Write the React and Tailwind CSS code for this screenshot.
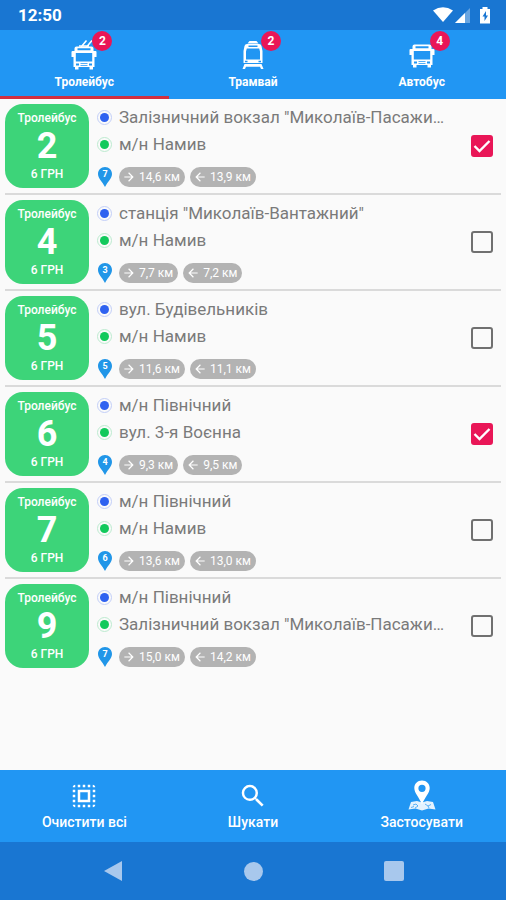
import { useState } from "react";
import { MdArrowBack, MdArrowForward, MdSearch, MdSelectAll } from "react-icons/md";

const TABS = [
  { id: "trolleybus", label: "Тролейбус", count: 2, Icon: TrolleybusIcon },
  { id: "tram", label: "Трамвай", count: 2, Icon: TramIcon },
  { id: "bus", label: "Автобус", count: 4, Icon: BusIcon },
];

const STATION = 'Залізничний вокзал "Миколаїв-Пасажи…';

const ROUTES = [
  { number: 2, from: STATION, to: "м/н Намив", vehicles: 7, there: "14,6 км", back: "13,9 км", checked: true },
  { number: 4, from: 'станція "Миколаїв-Вантажний"', to: "м/н Намив", vehicles: 3, there: "7,7 км", back: "7,2 км", checked: false },
  { number: 5, from: "вул. Будівельників", to: "м/н Намив", vehicles: 5, there: "11,6 км", back: "11,1 км", checked: false },
  { number: 6, from: "м/н Північний", to: "вул. 3-я Воєнна", vehicles: 4, there: "9,3 км", back: "9,5 км", checked: true },
  { number: 7, from: "м/н Північний", to: "м/н Намив", vehicles: 6, there: "13,6 км", back: "13,0 км", checked: false },
  { number: 9, from: "м/н Північний", to: STATION, vehicles: 7, there: "15,0 км", back: "14,2 км", checked: false },
];

function BusBody() {
  return (
    <>
      <path
        fillRule="evenodd"
        d="M4.500 6.500Q4.500 4.500 6.500 4.500H21.500Q23.500 4.500 23.500 6.500V9H25.500Q26.500 9 26.500 10V15H24.500V25H23V27.500H19.500V25H8.500V27.500H5V25H3.500V15H1.500V10Q1.500 9 2.500 9H4.500ZM7.500 6.300V8.300H20.500V6.300ZM5.800 11V19.500H22.200V11Z"
      />
      <path d="M6 21.500H9V23.500H6ZM19 21.500H22V23.500H19ZM10.500 21.300H17.500V22H10.500ZM10.500 23H17.500V23.700H10.500Z" fill="#2196f3" />
    </>
  );
}

function TrolleybusIcon() {
  return (
    <svg viewBox="0 0 28 32" className="h-8 w-7" fill="currentColor" aria-hidden="true">
      <g transform="translate(0 4)">
        <BusBody />
      </g>
      <path d="M11 9L16.500 2.500M16.500 9L22 2.500M9 8H19" stroke="currentColor" strokeWidth="1.500" fill="none" />
    </svg>
  );
}

function BusIcon() {
  return (
    <svg viewBox="0 0 28 32" className="h-8 w-7" fill="currentColor" aria-hidden="true">
      <g transform="translate(0 2)">
        <BusBody />
      </g>
    </svg>
  );
}

function TramIcon() {
  return (
    <svg viewBox="0 0 28 32" className="h-8 w-7" fill="currentColor" aria-hidden="true">
      <path d="M8.500 5.500L10.500 3H17.500L19.500 5.500Z" />
      <path
        fillRule="evenodd"
        d="M8 6H20Q22 6 22.500 8L23.500 13V25H4.500V13L5.500 8Q6 6 8 6ZM9.500 7.500V9H18.500V7.500ZM7.800 10.500L7 13.500V21.500H21V13.500L20.200 10.500Z"
      />
      <path d="M6 22.800H8.500V24.200H6ZM19.500 22.800H22V24.200H19.500Z" fill="#2196f3" />
      <path d="M5.500 26H22.500L24.500 31H22L21 28.700H7L6 31H3.500Z" />
    </svg>
  );
}

function MapPinIcon() {
  return (
    <svg viewBox="0 0 28 32" className="h-8 w-7" fill="currentColor" aria-hidden="true">
      <path d="M3 22L9 21L14 22.500L19 21L25 22L27.500 29.500L20.500 28.500L14 30.500L7.500 28.500L0.500 29.500Z" opacity="0.880" />
      <path d="M5 25L8 24L10 26L7 28M17 24L20 26L23 24.500M20 26L21 28M3 27.500L6 26.500" stroke="#2196f3" strokeWidth="0.700" fill="none" />
      <path
        fillRule="evenodd"
        d="M14 0.500C9.500 0.500 6.300 3.800 6.300 8C6.300 13 11 17 14 24.500C17 17 21.700 13 21.700 8C21.700 3.800 18.500 0.500 14 0.500ZM14 4.700A3.600 3.600 0 1 1 14 11.900A3.600 3.600 0 1 1 14 4.700Z"
      />
    </svg>
  );
}

function StatusBar() {
  return (
    <div className="flex h-[30px] shrink-0 items-center justify-between bg-[#1976d2] pr-[15px] pl-[18px]">
      <time className="text-[17px] leading-5 font-bold">12:50</time>
      <svg viewBox="0 0 58 18" className="h-[18px] w-[58px]" fill="currentColor" aria-hidden="true">
        <path d="M0 4.500Q10 -1.800 20 4.500L10 16Z" />
        <path d="M37 2V17H22Z" opacity="0.350" />
        <path d="M32 7V17H22Z" />
        <path fillRule="evenodd" d="M49.500 1H54.500V3H57V17.500H47V3H49.500ZM53 5L49.500 10.500H51.500V15L55 9.500H53Z" />
      </svg>
    </div>
  );
}

function Tabs({ active, onSelect }) {
  return (
    <nav className="grid h-[69px] shrink-0 grid-cols-3 bg-[#2196f3]">
      {TABS.map(({ id, label, count, Icon }) => (
        <button
          key={id}
          type="button"
          onClick={() => onSelect(id)}
          aria-pressed={id === active}
          className={
            id === active
              ? "flex flex-col items-center border-b-3 border-[#d32f3f] pt-2"
              : "flex flex-col items-center border-b-3 border-[#2196f3] pt-2"
          }
        >
          <span className="relative">
            <Icon />
            <span className="absolute -top-[7px] left-[22px] flex h-5 w-5 items-center justify-center rounded-full bg-[#e91657] text-xs font-bold">
              {count}
            </span>
          </span>
          <span className="mt-1 text-xs leading-4 font-bold">{label}</span>
        </button>
      ))}
    </nav>
  );
}

function Stop({ children, tone }) {
  return (
    <span className="flex h-[27px] items-center gap-[7px]">
      <span
        className={
          tone === "start"
            ? "flex h-[15px] w-[15px] shrink-0 items-center justify-center rounded-full border border-[#c3cff8]"
            : "flex h-[15px] w-[15px] shrink-0 items-center justify-center rounded-full border border-[#bdebd0]"
        }
      >
        <span
          className={
            tone === "start" ? "h-[9px] w-[9px] rounded-full bg-[#2f62f0]" : "h-[9px] w-[9px] rounded-full bg-[#12c95c]"
          }
        />
      </span>
      <span className="truncate">{children}</span>
    </span>
  );
}

function Distance({ Icon, children }) {
  return (
    <span className="flex h-5 items-center gap-[3px] rounded-full bg-[#b3b3b3] pr-[5px] pl-[3px] text-xs text-white">
      <Icon className="h-[14px] w-[14px]" aria-hidden="true" />
      {children}
    </span>
  );
}

function Route({ route }) {
  return (
    <li className="mx-[5px] border-b-2 border-[#dadada] last:border-b-0">
      <label className="flex h-[94px] items-center">
        <span className="flex h-[84px] w-[84px] shrink-0 flex-col items-center justify-between rounded-[18px] bg-[#3dd479] py-[6px] text-white">
          <span className="text-xs leading-4 font-medium">Тролейбус</span>
          <strong className="text-4xl leading-9 font-bold">{route.number}</strong>
          <span className="text-xs leading-4 font-medium">6 ГРН</span>
        </span>
        <span className="ml-2 block w-[352px] min-w-0 shrink text-[17px] text-[#7a7a7a]">
          <Stop tone="start">{route.from}</Stop>
          <Stop tone="end">{route.to}</Stop>
          <span className="mt-2 flex h-[22px] items-center">
            <span className="relative mr-[6px] flex h-[22px] w-4 justify-center">
              <svg viewBox="0 0 16 22" className="absolute inset-0 h-[22px] w-4" fill="#2196e8" aria-hidden="true">
                <path d="M8 1C4 1 1 4 1 8C1 12.500 5 15 8 21C11 15 15 12.500 15 8C15 4 12 1 8 1Z" />
              </svg>
              <span className="relative text-[9px] leading-4 font-bold text-white">{route.vehicles}</span>
            </span>
            <span className="flex gap-[5px]">
              <Distance Icon={MdArrowForward}>{route.there}</Distance>
              <Distance Icon={MdArrowBack}>{route.back}</Distance>
            </span>
          </span>
        </span>
        <span className="relative mr-2 ml-auto h-[22px] w-[22px] shrink-0">
          <input
            type="checkbox"
            defaultChecked={route.checked}
            className="peer block h-[22px] w-[22px] appearance-none rounded-[3px] border-2 border-[#707070] checked:border-[#e91657] checked:bg-[#e91657]"
          />
          <svg
            viewBox="0 0 22 22"
            className="pointer-events-none absolute inset-0 hidden h-[22px] w-[22px] peer-checked:block"
            fill="none"
            stroke="white"
            strokeWidth="2.400"
            aria-hidden="true"
          >
            <path d="M3.500 11L8.500 16L18.500 6" />
          </svg>
        </span>
      </label>
    </li>
  );
}

function Action({ icon, children }) {
  return (
    <button type="button" className="flex flex-col items-center pt-[10px] text-sm leading-5 font-medium">
      <span className="flex h-8 items-center">{icon}</span>
      {children}
    </button>
  );
}

export default function App() {
  const [active, setActive] = useState("trolleybus");

  return (
    <div className="flex min-h-screen flex-col bg-[#fafafa] font-[Roboto,'Noto_Sans',sans-serif] text-white">
      <StatusBar />
      <Tabs active={active} onSelect={setActive} />
      <main className="grow">
        <ul>
          {ROUTES.map((route) => (
            <Route key={route.number} route={route} />
          ))}
        </ul>
      </main>
      <div className="grid h-[72px] shrink-0 grid-cols-3 bg-[#2196f3]">
        <Action icon={<MdSelectAll className="h-[30px] w-[30px]" />}>Очистити всі</Action>
        <Action icon={<MdSearch className="h-[30px] w-[30px]" />}>Шукати</Action>
        <Action icon={<MapPinIcon />}>Застосувати</Action>
      </div>
      <nav className="flex h-[58px] shrink-0 items-center justify-center gap-[121px] bg-[#1976d2] text-[#a8c8ed]">
        <button type="button" aria-label="Назад">
          <svg viewBox="0 0 20 20" className="h-5 w-5" fill="currentColor">
            <path d="M1 10L19 0V20Z" />
          </svg>
        </button>
        <button type="button" aria-label="Додому" className="h-[19px] w-[19px] rounded-full bg-[#a8c8ed]" />
        <button type="button" aria-label="Огляд" className="h-5 w-5 rounded-[2px] bg-[#a8c8ed]" />
      </nav>
    </div>
  );
}
